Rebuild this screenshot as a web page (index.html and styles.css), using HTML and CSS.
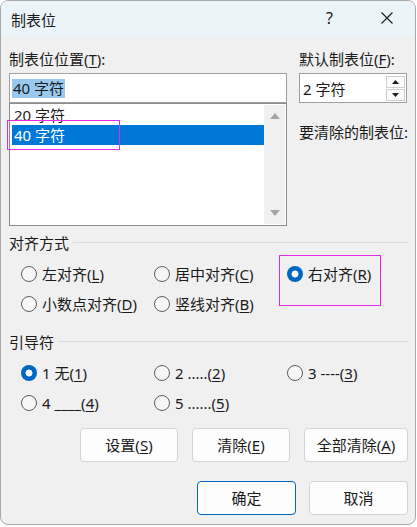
FILE: index.html
```html
<!DOCTYPE html>
<html lang="zh-CN">
<head>
<meta charset="utf-8">
<title>制表位</title>
<link rel="stylesheet" href="styles.css">
</head>
<body>
<div class="dialog">
  <div class="titlebar">
    <span class="title">制表位</span>
    <div class="caption-btns">
      <span class="cap help">?</span>
      <span class="cap close"><svg width="12" height="12" viewBox="0 0 12 12"><path d="M0.5 0.5 L11.5 11.5 M11.5 0.5 L0.5 11.5" stroke="#1b1b1b" stroke-width="1.1" fill="none"/></svg></span>
    </div>
  </div>
  <div class="content">
    <div class="top">
      <div class="col-left">
        <div class="label">制表位位置(<u>T</u>):</div>
        <div class="input"><span class="sel">40 字符</span></div>
        <div class="list">
          <div class="items">
            <div class="item">20 字符</div>
            <div class="item active">40 字符</div>
          </div>
          <div class="scrollbar">
            <svg width="10" height="6" viewBox="0 0 10 6"><path d="M5 0 L10 6 L0 6 Z" fill="#a6a6a6"/></svg>
            <svg width="10" height="6" viewBox="0 0 10 6"><path d="M0 0 L10 0 L5 6 Z" fill="#a6a6a6"/></svg>
          </div>
        </div>
      </div>
      <div class="col-right">
        <div class="label">默认制表位(<u>F</u>):</div>
        <div class="spin">
          <span class="spin-val">2 字符</span>
          <div class="spin-btns">
            <span class="sb"><svg width="7" height="4" viewBox="0 0 7 4"><path d="M3.5 0 L7 4 L0 4 Z" fill="#1a1a1a"/></svg></span>
            <span class="sb"><svg width="7" height="4" viewBox="0 0 7 4"><path d="M0 0 L7 0 L3.5 4 Z" fill="#1a1a1a"/></svg></span>
          </div>
        </div>
        <div class="label clear-label">要清除的制表位:</div>
      </div>
    </div>

    <div class="group group-align">
      <div class="group-head"><span>对齐方式</span><i class="rule"></i></div>
      <div class="radios">
        <div class="radio"><span class="dot"></span><span>左对齐(<u>L</u>)</span></div>
        <div class="radio"><span class="dot"></span><span>居中对齐(<u>C</u>)</span></div>
        <div class="radio"><span class="dot on"></span><span>右对齐(<u>R</u>)</span></div>
        <div class="radio"><span class="dot"></span><span>小数点对齐(<u>D</u>)</span></div>
        <div class="radio"><span class="dot"></span><span>竖线对齐(<u>B</u>)</span></div>
      </div>
    </div>

    <div class="group group-leader">
      <div class="group-head"><span>引导符</span><i class="rule"></i></div>
      <div class="radios">
        <div class="radio"><span class="dot on"></span><span>1 无(<u>1</u>)</span></div>
        <div class="radio"><span class="dot"></span><span>2 .....(<u>2</u>)</span></div>
        <div class="radio"><span class="dot"></span><span>3 ----(<u>3</u>)</span></div>
        <div class="radio"><span class="dot"></span><span>4 ____(<u>4</u>)</span></div>
        <div class="radio"><span class="dot"></span><span>5 ......(<u>5</u>)</span></div>
      </div>
    </div>

    <div class="btn-row actions">
      <span class="btn w98">设置(<u>S</u>)</span>
      <span class="btn w98">清除(<u>E</u>)</span>
      <span class="btn w104">全部清除(<u>A</u>)</span>
    </div>
    <div class="btn-row footer">
      <span class="btn w99 primary">确定</span>
      <span class="btn w99">取消</span>
    </div>
  </div>
  <div class="focus focus-list"></div>
  <div class="focus focus-radio"></div>
</div>
</body>
</html>
```

FILE: styles.css
```css
* { box-sizing: border-box; }
html, body { margin: 0; padding: 0; }
body {
  background: #ffffff;
  font-family: "Noto Sans", "Noto Sans CJK SC", sans-serif;
  font-size: 15px;
  color: #1a1a1a;
  width: 417px;
  height: 527px;
  overflow: hidden;
}
u { text-decoration: underline; text-decoration-thickness: 1px; text-underline-offset: 2px; }

.dialog {
  position: relative;
  width: 416px;
  height: 525px;
  background: #f0f0f0;
  border: 1px solid #a9a9a9;
  border-radius: 8px;
  overflow: hidden;
  display: flex;
  flex-direction: column;
}

.titlebar {
  height: 36px;
  background: #eaf4f9;
  display: flex;
  align-items: center;
  justify-content: space-between;
  padding-left: 10px;
  flex: none;
}
.title { line-height: 20px; margin-top: 1px; }
.caption-btns { display: flex; height: 100%; }
.cap {
  width: 57px;
  height: 100%;
  display: flex;
  align-items: center;
  justify-content: center;
}
.help { font-size: 16px; padding-bottom: 2px; }
.close svg { display: block; margin-bottom: 2px; }

.content {
  padding: 12px 7px 0 8px;
  display: flex;
  flex-direction: column;
}

.top {
  display: grid;
  grid-template-columns: 278px 108px;
  column-gap: 12px;
}
.label { line-height: 20px; height: 20px; white-space: nowrap; }

.input {
  margin-top: 4px;
  height: 30px;
  background: #fff;
  border: 1px solid #a0a0a0;
  display: flex;
  align-items: center;
  padding-left: 2px;
}
.sel {
  background: #99c9ef;
  line-height: 19px;
  padding: 0 1px 0 1px;
}

.list {
  height: 123px;
  background: #fff;
  border: 1px solid #8c8c8c;
  display: flex;
  padding: 1px 1px 1px 1px;
}
.items { flex: 1; padding-top: 0; padding-left: 1px; }
.item { height: 20px; line-height: 20px; padding-left: 2px; }
.item.active { background: #0078d7; color: #fff; }
.scrollbar {
  width: 21px;
  background: #f0f0f0;
  display: flex;
  flex-direction: column;
  justify-content: space-between;
  align-items: center;
  padding: 8px 0 8px 0;
}
.scrollbar svg { display: block; }

.spin {
  margin-top: 4px;
  height: 30px;
  background: #fff;
  border: 1px solid #a0a0a0;
  display: flex;
  align-items: center;
  justify-content: space-between;
  padding: 0 1px 0 3px;
}
.spin-btns { display: flex; flex-direction: column; gap: 1px; }
.sb {
  width: 19px;
  height: 12px;
  background: #fbfbfb;
  border: 1px solid #cfcfcf;
  display: flex;
  align-items: center;
  justify-content: center;
}
.sb svg { display: block; }
.clear-label { margin-top: 19px; }

.group-align { margin-top: 7px; }
.group-leader { margin-top: 18px; }
.group-head {
  display: flex;
  align-items: center;
  height: 20px;
  line-height: 20px;
}
.rule {
  flex: 1;
  height: 1px;
  background: #dadada;
  margin-left: 4px;
  margin-top: -2px;
}
.radios {
  display: grid;
  grid-template-columns: repeat(3, 133px);
  grid-auto-rows: 20px;
  row-gap: 10px;
  padding-left: 12px;
  margin-top: 11px;
}
.radio {
  display: flex;
  align-items: center;
  gap: 5px;
  line-height: 20px;
  white-space: nowrap;
}
.dot {
  width: 16px;
  height: 16px;
  border-radius: 50%;
  border: 1px solid #5e5e5e;
  background: #f7f7f7;
  flex: none;
}
.dot.on {
  border: none;
  background: radial-gradient(circle, #ffffff 0 3.2px, #0067c0 3.8px);
}

.btn-row { display: flex; justify-content: flex-end; }
.actions { margin-top: 15px; gap: 14px; }
.footer { margin-top: 19px; gap: 13px; }
.btn {
  height: 34px;
  background: #fdfdfd;
  border: 1px solid #d3d3d3;
  border-radius: 4px;
  display: flex;
  align-items: center;
  justify-content: center;
  line-height: 20px;
  white-space: nowrap;
}
.w98 { width: 98px; }
.w99 { width: 99px; }
.w104 { width: 104px; }
.btn.primary { border-color: #0067c0; }

.focus {
  position: absolute;
  border: 1px solid #e62be6;
  pointer-events: none;
}
.focus-list { left: 6px; top: 119px; width: 113px; height: 30px; }
.focus-radio { left: 278px; top: 254px; width: 102px; height: 51px; }
```
